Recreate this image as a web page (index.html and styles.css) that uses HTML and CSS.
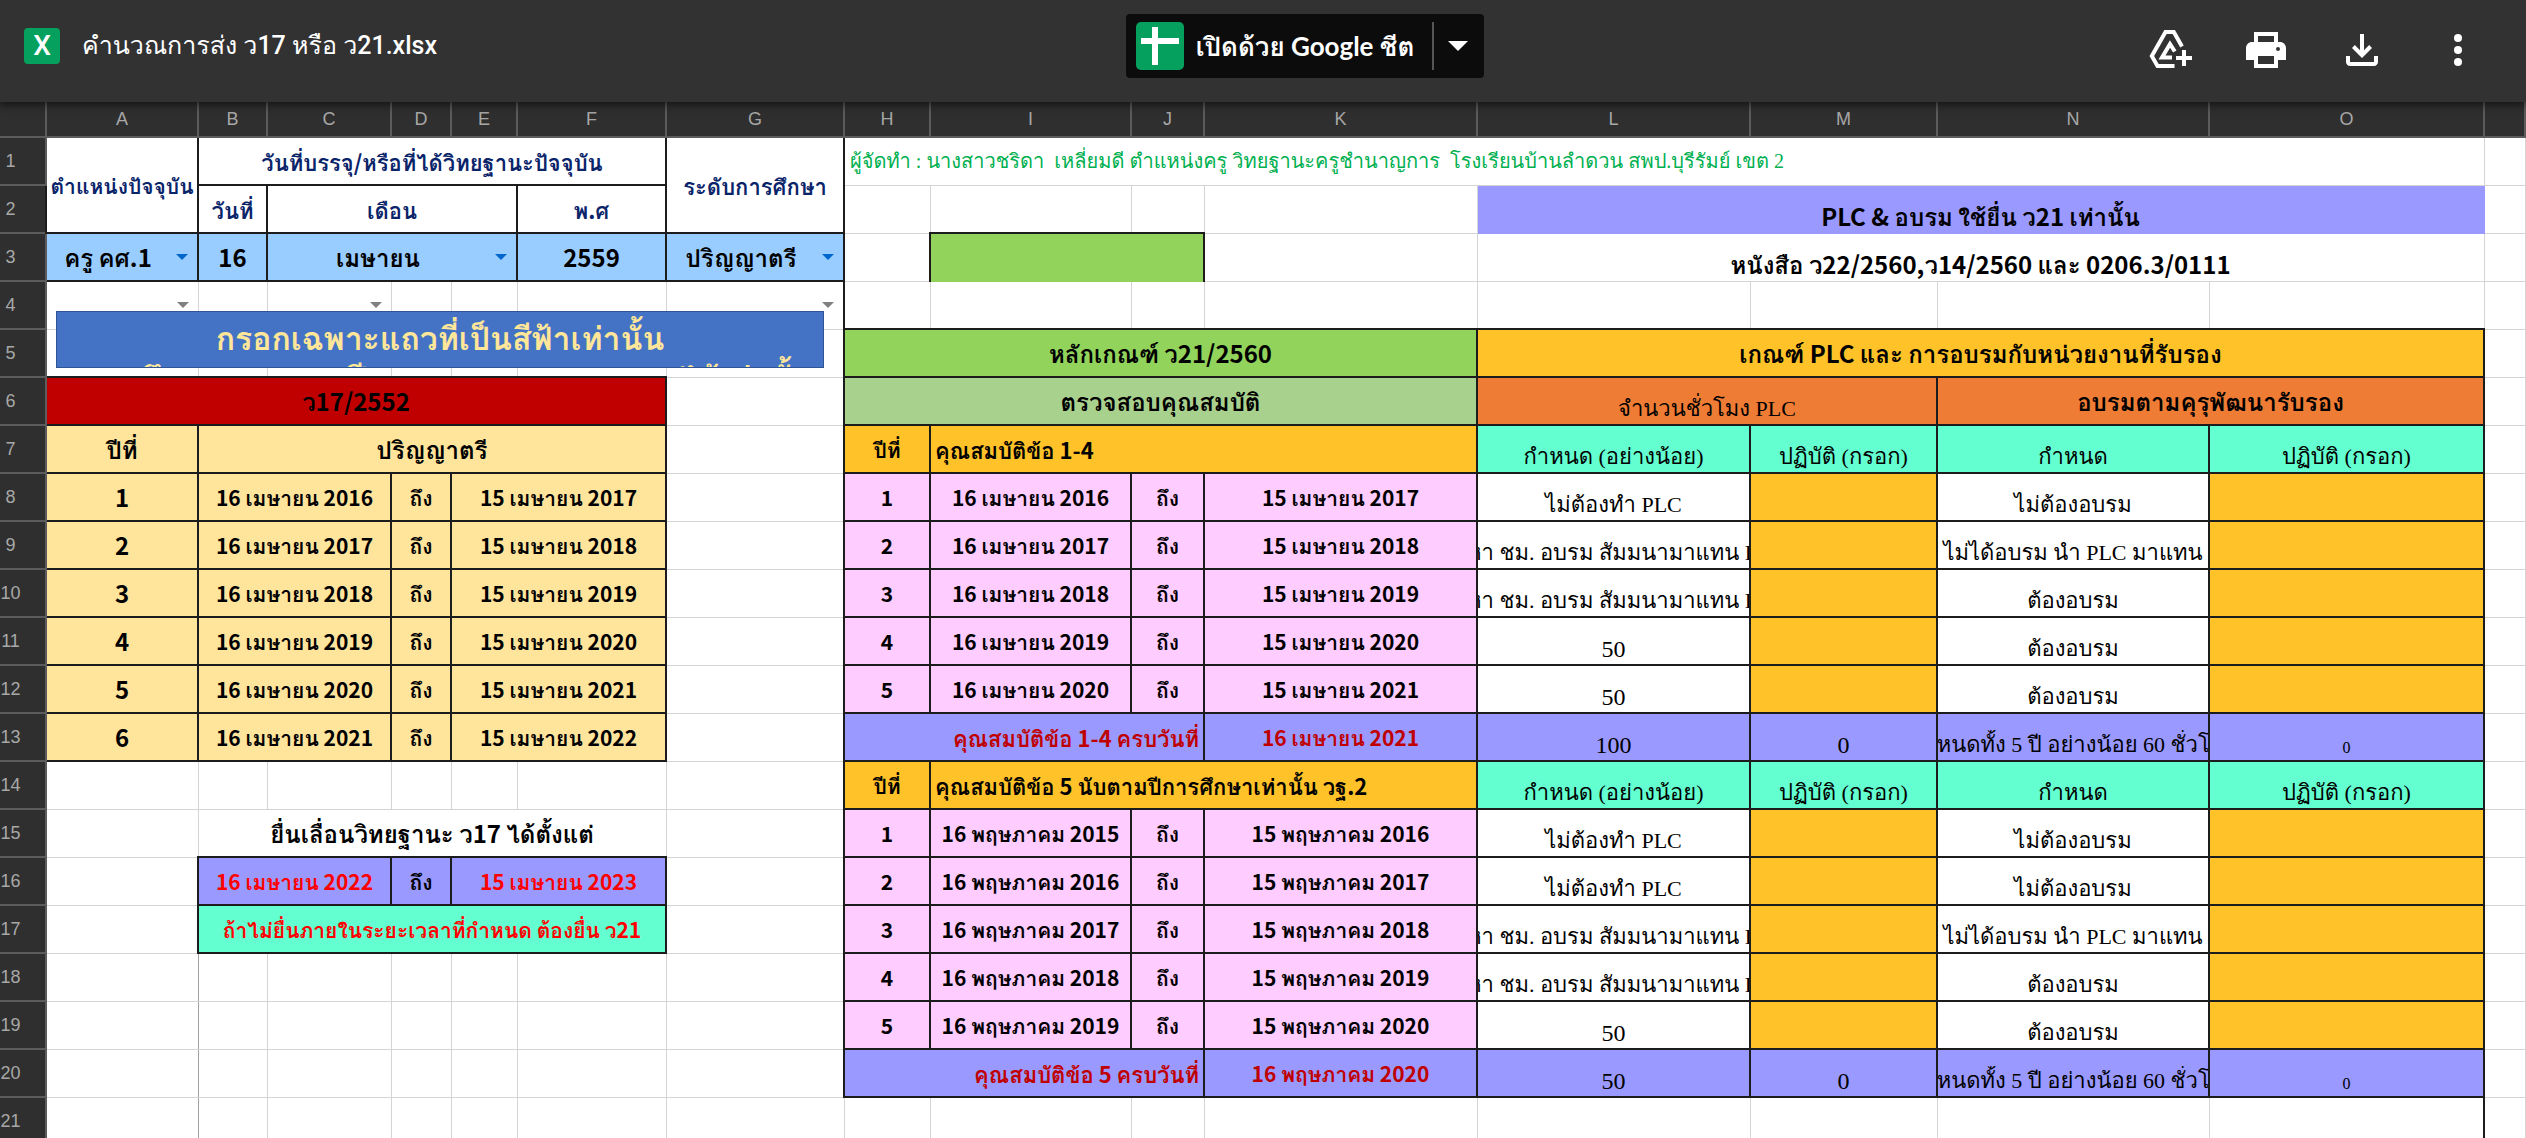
FILE: index.html
```html
<!DOCTYPE html>
<html lang="th">
<head>
<meta charset="utf-8">
<meta name="viewport" content="width=device-width, initial-scale=1">
<title>คำนวณการส่ง ว17 หรือ ว21.xlsx</title>
<link rel="stylesheet" href="styles.css">
</head>
<body>
<header class="toolbar">
  <div class="file">
    <span class="file-icon" aria-hidden="true">X</span>
    <h1 class="file-name">คำนวณการส่ง ว17 หรือ ว21.xlsx</h1>
  </div>
  <div class="open-with">
    <button class="open-main" type="button">
      <svg width="48" height="48" viewBox="0 0 48 48" aria-hidden="true"><rect width="48" height="48" rx="5" fill="#05a05d"/><path d="M16 5h6v11h21v6H22v21h-6V22H5v-6h11z" fill="#fff"/></svg>
      <span>เปิดด้วย Google ชีต</span>
    </button>
    <button class="open-more" type="button" aria-label="ตัวเลือกเพิ่มเติม">
      <svg width="20" height="10" viewBox="0 0 20 10" aria-hidden="true"><path d="M0 0h20L10 10z" fill="#fff"/></svg>
    </button>
  </div>
  <div class="actions">
    <button class="icon-button" type="button" aria-label="เพิ่มลงในไดรฟ์">
      <svg width="48" height="48" viewBox="0 0 48 48" fill="none" stroke="#fff" stroke-width="4" aria-hidden="true"><path d="M36 20.500L27.800 6H19.500L5.800 30l5.700 10H28.500M28.800 25.500L24 18l-8 13.500h10"/><path d="M30 32h16M38 24v16"/></svg>
    </button>
    <button class="icon-button" type="button" aria-label="พิมพ์">
      <svg width="48" height="48" viewBox="0 0 24 24" fill="#fff" aria-hidden="true"><path d="M19 8h-1V3H6v5H5c-1.660 0-3 1.340-3 3v6h4v4h12v-4h4v-6c0-1.660-1.340-3-3-3zM8 5h8v3H8V5zm8 14H8v-4h8v4zm2-6.500a1 1 0 1 1 0-2 1 1 0 0 1 0 2z"/></svg>
    </button>
    <button class="icon-button" type="button" aria-label="ดาวน์โหลด">
      <svg width="48" height="48" viewBox="0 0 24 24" fill="#fff" aria-hidden="true"><path d="M12 16l-5-5 1.400-1.450 2.600 2.600V4h2v8.150l2.600-2.600L17 11l-5 5zm-6 4c-1.100 0-2-.900-2-2v-3h2v3h12v-3h2v3c0 1.100-.900 2-2 2H6z"/></svg>
    </button>
    <button class="icon-button" type="button" aria-label="การทำงานเพิ่มเติม">
      <svg width="48" height="48" viewBox="0 0 24 24" fill="#fff" aria-hidden="true"><circle cx="12" cy="6" r="2"/><circle cx="12" cy="12" r="2"/><circle cx="12" cy="18" r="2"/></svg>
    </button>
  </div>
</header>
<main class="sheet">
<table class="grid">
<colgroup><col class="w-head"><col class="w-a"><col class="w-b"><col class="w-c"><col class="w-d"><col class="w-e"><col class="w-f"><col class="w-g"><col class="w-h"><col class="w-i"><col class="w-j"><col class="w-k"><col class="w-l"><col class="w-m"><col class="w-n"><col class="w-o"><col></colgroup>
<thead>
<tr><th></th><th scope="col">A</th><th scope="col">B</th><th scope="col">C</th><th scope="col">D</th><th scope="col">E</th><th scope="col">F</th><th scope="col">G</th><th scope="col">H</th><th scope="col">I</th><th scope="col">J</th><th scope="col">K</th><th scope="col">L</th><th scope="col">M</th><th scope="col">N</th><th scope="col">O</th><th></th></tr>
</thead>
<tbody>
<tr><th scope="row">1</th><td class="box navy tight" rowspan="2">ตำแหน่งปัจจุบัน</td><td class="box navy" colspan="5">วันที่บรรจุ/หรือที่ได้วิทยฐานะปัจจุบัน</td><td class="box navy" rowspan="2">ระดับการศึกษา</td><td class="credit" colspan="8">ผู้จัดทำ : นางสาวชริดา&nbsp; เหลี่ยมดี ตำแหน่งครู วิทยฐานะครูชำนาญการ&nbsp; โรงเรียนบ้านลำดวน สพป.บุรีรัมย์ เขต 2</td><td></td></tr>
<tr><th scope="row">2</th><td class="box navy">วันที่</td><td class="box navy" colspan="3">เดือน</td><td class="box navy">พ.ศ</td><td></td><td></td><td></td><td></td><td class="violet violet-edge big low" colspan="4">PLC &amp; อบรม ใช้ยื่น ว21 เท่านั้น</td><td></td></tr>
<tr><th scope="row">3</th><td class="box sky"><select class="pick" aria-label="ตำแหน่งปัจจุบัน"><option>ครู คศ.1</option></select></td><td class="box sky big">16</td><td class="box sky" colspan="3"><select class="pick" aria-label="เดือน"><option>เมษายน</option></select></td><td class="box sky big">2559</td><td class="box sky"><select class="pick" aria-label="ระดับการศึกษา"><option>ปริญญาตรี</option></select></td><td></td><td class="lime lime-box" colspan="2"></td><td></td><td class="big low" colspan="4">หนังสือ ว22/2560,ว14/2560 และ 0206.3/0111</td><td></td></tr>
<tr><th scope="row">4</th><td><select class="pick pick-empty" aria-label="A4"><option></option></select></td><td></td><td><select class="pick pick-empty" aria-label="C4"><option></option></select></td><td></td><td></td><td></td><td class="edge-right"><select class="pick pick-empty" aria-label="G4"><option></option></select></td><td></td><td></td><td></td><td></td><td></td><td></td><td></td><td></td><td></td></tr>
<tr><th scope="row">5</th><td></td><td></td><td></td><td></td><td></td><td></td><td></td><td class="box lime big" colspan="4">หลักเกณฑ์ ว21/2560</td><td class="box amber big" colspan="4">เกณฑ์ PLC และ การอบรมกับหน่วยงานที่รับรอง</td><td></td></tr>
<tr><th scope="row">6</th><td class="box red big" colspan="6">ว17/2552</td><td></td><td class="box sage big" colspan="4">ตรวจสอบคุณสมบัติ</td><td class="box orange serif" colspan="2">จำนวนชั่วโมง PLC</td><td class="box orange big" colspan="2">อบรมตามคุรุพัฒนารับรอง</td><td></td></tr>
<tr><th scope="row">7</th><td class="box sand big">ปีที่</td><td class="box sand big" colspan="5">ปริญญาตรี</td><td></td><td class="box amber">ปีที่</td><td class="box amber left" colspan="3">คุณสมบัติข้อ 1-4</td><td class="box mint serif">กำหนด (อย่างน้อย)</td><td class="box mint serif">ปฏิบัติ (กรอก)</td><td class="box mint serif">กำหนด</td><td class="box mint serif">ปฏิบัติ (กรอก)</td><td></td></tr>
<tr><th scope="row">8</th><td class="box sand big">1</td><td class="box sand" colspan="2">16 เมษายน 2016</td><td class="box sand">ถึง</td><td class="box sand" colspan="2">15 เมษายน 2017</td><td></td><td class="box pink">1</td><td class="box pink">16 เมษายน 2016</td><td class="box pink">ถึง</td><td class="box pink">15 เมษายน 2017</td><td class="box serif">ไม่ต้องทำ PLC</td><td class="box amber"></td><td class="box serif">ไม่ต้องอบรม</td><td class="box amber"></td><td></td></tr>
<tr><th scope="row">9</th><td class="box sand big">2</td><td class="box sand" colspan="2">16 เมษายน 2017</td><td class="box sand">ถึง</td><td class="box sand" colspan="2">15 เมษายน 2018</td><td></td><td class="box pink">2</td><td class="box pink">16 เมษายน 2017</td><td class="box pink">ถึง</td><td class="box pink">15 เมษายน 2018</td><td class="box serif"><div class="clip">ให้หา ชม. อบรม สัมมนามาแทน PLC</div></td><td class="box amber"></td><td class="box serif"><div class="clip">ไม่ได้อบรม นำ PLC มาแทน</div></td><td class="box amber"></td><td></td></tr>
<tr><th scope="row">10</th><td class="box sand big">3</td><td class="box sand" colspan="2">16 เมษายน 2018</td><td class="box sand">ถึง</td><td class="box sand" colspan="2">15 เมษายน 2019</td><td></td><td class="box pink">3</td><td class="box pink">16 เมษายน 2018</td><td class="box pink">ถึง</td><td class="box pink">15 เมษายน 2019</td><td class="box serif"><div class="clip">ให้หา ชม. อบรม สัมมนามาแทน PLC</div></td><td class="box amber"></td><td class="box serif">ต้องอบรม</td><td class="box amber"></td><td></td></tr>
<tr><th scope="row">11</th><td class="box sand big">4</td><td class="box sand" colspan="2">16 เมษายน 2019</td><td class="box sand">ถึง</td><td class="box sand" colspan="2">15 เมษายน 2020</td><td></td><td class="box pink">4</td><td class="box pink">16 เมษายน 2019</td><td class="box pink">ถึง</td><td class="box pink">15 เมษายน 2020</td><td class="box serif number">50</td><td class="box amber"></td><td class="box serif">ต้องอบรม</td><td class="box amber"></td><td></td></tr>
<tr><th scope="row">12</th><td class="box sand big">5</td><td class="box sand" colspan="2">16 เมษายน 2020</td><td class="box sand">ถึง</td><td class="box sand" colspan="2">15 เมษายน 2021</td><td></td><td class="box pink">5</td><td class="box pink">16 เมษายน 2020</td><td class="box pink">ถึง</td><td class="box pink">15 เมษายน 2021</td><td class="box serif number">50</td><td class="box amber"></td><td class="box serif">ต้องอบรม</td><td class="box amber"></td><td></td></tr>
<tr><th scope="row">13</th><td class="box sand big">6</td><td class="box sand" colspan="2">16 เมษายน 2021</td><td class="box sand">ถึง</td><td class="box sand" colspan="2">15 เมษายน 2022</td><td></td><td class="box violet crimson right" colspan="3">คุณสมบัติข้อ 1-4 ครบวันที่</td><td class="box violet crimson">16 เมษายน 2021</td><td class="box violet serif number">100</td><td class="box violet serif number">0</td><td class="box violet serif"><div class="clip">กำหนดทั้ง 5 ปี อย่างน้อย 60 ชั่วโมง</div></td><td class="box violet serif small">0</td><td></td></tr>
<tr><th scope="row">14</th><td></td><td></td><td></td><td></td><td></td><td></td><td></td><td class="box amber">ปีที่</td><td class="box amber left" colspan="3">คุณสมบัติข้อ 5 นับตามปีการศึกษาเท่านั้น วฐ.2</td><td class="box mint serif">กำหนด (อย่างน้อย)</td><td class="box mint serif">ปฏิบัติ (กรอก)</td><td class="box mint serif">กำหนด</td><td class="box mint serif">ปฏิบัติ (กรอก)</td><td></td></tr>
<tr><th scope="row">15</th><td></td><td class="big" colspan="5">ยื่นเลื่อนวิทยฐานะ ว17 ได้ตั้งแต่</td><td></td><td class="box pink">1</td><td class="box pink">16 พฤษภาคม 2015</td><td class="box pink">ถึง</td><td class="box pink">15 พฤษภาคม 2016</td><td class="box serif">ไม่ต้องทำ PLC</td><td class="box amber"></td><td class="box serif">ไม่ต้องอบรม</td><td class="box amber"></td><td></td></tr>
<tr><th scope="row">16</th><td></td><td class="box violet scarlet" colspan="2">16 เมษายน 2022</td><td class="box violet">ถึง</td><td class="box violet scarlet" colspan="2">15 เมษายน 2023</td><td></td><td class="box pink">2</td><td class="box pink">16 พฤษภาคม 2016</td><td class="box pink">ถึง</td><td class="box pink">15 พฤษภาคม 2017</td><td class="box serif">ไม่ต้องทำ PLC</td><td class="box amber"></td><td class="box serif">ไม่ต้องอบรม</td><td class="box amber"></td><td></td></tr>
<tr><th scope="row">17</th><td></td><td class="box mint scarlet" colspan="5">ถ้าไม่ยื่นภายในระยะเวลาที่กำหนด ต้องยื่น ว21</td><td></td><td class="box pink">3</td><td class="box pink">16 พฤษภาคม 2017</td><td class="box pink">ถึง</td><td class="box pink">15 พฤษภาคม 2018</td><td class="box serif"><div class="clip">ให้หา ชม. อบรม สัมมนามาแทน PLC</div></td><td class="box amber"></td><td class="box serif"><div class="clip">ไม่ได้อบรม นำ PLC มาแทน</div></td><td class="box amber"></td><td></td></tr>
<tr><th scope="row">18</th><td class="dim-right"></td><td></td><td></td><td></td><td></td><td></td><td></td><td class="box pink">4</td><td class="box pink">16 พฤษภาคม 2018</td><td class="box pink">ถึง</td><td class="box pink">15 พฤษภาคม 2019</td><td class="box serif"><div class="clip">ให้หา ชม. อบรม สัมมนามาแทน PLC</div></td><td class="box amber"></td><td class="box serif">ต้องอบรม</td><td class="box amber"></td><td></td></tr>
<tr><th scope="row">19</th><td class="dim-right"></td><td></td><td></td><td></td><td></td><td></td><td></td><td class="box pink">5</td><td class="box pink">16 พฤษภาคม 2019</td><td class="box pink">ถึง</td><td class="box pink">15 พฤษภาคม 2020</td><td class="box serif number">50</td><td class="box amber"></td><td class="box serif">ต้องอบรม</td><td class="box amber"></td><td></td></tr>
<tr><th scope="row">20</th><td class="dim-right"></td><td></td><td></td><td></td><td></td><td></td><td></td><td class="box violet crimson right" colspan="3">คุณสมบัติข้อ 5 ครบวันที่</td><td class="box violet crimson">16 พฤษภาคม 2020</td><td class="box violet serif number">50</td><td class="box violet serif number">0</td><td class="box violet serif"><div class="clip">กำหนดทั้ง 5 ปี อย่างน้อย 60 ชั่วโมง</div></td><td class="box violet serif small">0</td><td></td></tr>
<tr><th scope="row">21</th><td class="dim-right"></td><td></td><td></td><td></td><td></td><td></td><td></td><td></td><td></td><td></td><td></td><td></td><td></td><td></td><td class="edge-right"></td><td></td></tr>
</tbody>
</table>
<div class="note">กรอกเฉพาะแถวที่เป็นสีฟ้าเท่านั้น<br>ระบบจึงแสดงผลของปีตามระยะเวลาครบรอบได้เท่านั้น</div>
</main>
</body>
</html>
```
FILE: styles.css
```css
* {
  box-sizing: border-box;
}

body {
  margin: 0;
  height: 100vh;
  display: flex;
  flex-direction: column;
  overflow: hidden;
  background: #fff;
  font-family: "Noto Sans CJK SC", Loma, sans-serif;
}

button {
  margin: 0;
  padding: 0;
  border: 0;
  background: none;
  color: inherit;
  font: inherit;
  cursor: pointer;
}

svg {
  display: block;
}

/* Toolbar */
.toolbar {
  position: relative;
  z-index: 1;
  flex: none;
  height: 102px;
  padding: 0 44px 0 24px;
  display: grid;
  grid-template-columns: 1fr auto 1fr;
  background: #323232;
  color: #fff;
  font-family: Roboto, Loma, sans-serif;
  box-shadow: 0 0 10px 2px rgba(0, 0, 0, 0.7);
}

.file {
  display: flex;
  align-items: center;
  gap: 22px;
  height: 92px;
}

.file-icon {
  width: 36px;
  height: 36px;
  border-radius: 4px;
  background: #05a05d;
  font-size: 28px;
  font-weight: 500;
  line-height: 36px;
  text-align: center;
}

.file-name {
  margin: 0;
  font-size: 25px;
  font-weight: 500;
  line-height: 40px;
  white-space: nowrap;
}

.open-with {
  display: flex;
  align-items: center;
  height: 64px;
  margin-top: 14px;
  margin-left: 104px;
  padding: 8px 16px 8px 10px;
  border-radius: 4px;
  background: #0c0c0c;
}

.open-main {
  display: flex;
  align-items: center;
  gap: 12px;
  padding-right: 18px;
  font-family: Lato, Loma, sans-serif;
  font-size: 26px;
  font-weight: 700;
  line-height: 48px;
  white-space: nowrap;
}

.open-more {
  height: 48px;
  padding-left: 14px;
  border-left: 2px solid #555;
}

.actions {
  display: flex;
  justify-content: flex-end;
  gap: 48px;
  height: 48px;
  margin-top: 26px;
}

.icon-button {
  width: 48px;
  height: 48px;
}

/* Spreadsheet */
.sheet {
  position: relative;
  flex: 1;
  min-height: 0;
  overflow: hidden;
}

.grid {
  width: 100%;
  table-layout: fixed;
  border-collapse: collapse;
}

.w-head { width: 46px; }
.w-a { width: 152px; }
.w-b { width: 69px; }
.w-c { width: 124px; }
.w-d { width: 60px; }
.w-e { width: 66px; }
.w-f { width: 149px; }
.w-g { width: 178px; }
.w-h { width: 86px; }
.w-i { width: 201px; }
.w-j { width: 73px; }
.w-k { width: 273px; }
.w-l { width: 273px; }
.w-m { width: 187px; }
.w-n { width: 272px; }
.w-o { width: 275px; }

th {
  height: 48px;
  padding: 0;
  border: 2px solid #5c5c5c;
  border-left: 0;
  background: #2f2f2f;
  color: #a8a8a8;
  font-family: "Liberation Sans", sans-serif;
  font-size: 18px;
  font-weight: 400;
}

thead th {
  height: 35px;
  border-top: 0;
}

tbody th {
  padding-right: 24px;
}

td {
  height: 48px;
  padding: 0 2px;
  border: 1px solid #d4d4d4;
  color: #000;
  font-size: 21px;
  font-weight: 700;
  line-height: 34px;
  text-align: center;
  white-space: nowrap;
  overflow: hidden;
}

.big { font-size: 24px; }
.left { font-size: 22px; text-align: left; padding-left: 4px; }
.right { font-size: 22px; text-align: right; padding-right: 4px; }
.low { vertical-align: bottom; }

.serif {
  font-family: "Liberation Serif", Loma, serif;
  font-size: 22px;
  font-weight: 400;
  line-height: 30px;
  vertical-align: bottom;
}

.number { font-size: 24px; }

.small {
  font-size: 16px;
  line-height: 24px;
}

.clip {
  display: flex;
  justify-content: center;
  margin: 0 -2px;
  overflow: hidden;
}

.credit {
  padding-left: 5px;
  color: #00b050;
  font-family: "Liberation Serif", Loma, serif;
  font-size: 20px;
  font-weight: 400;
  text-align: left;
}

.box { border: 2px solid #1c1c1c; }
.edge-right { border-right: 2px solid #1c1c1c; }
.dim-right { border-right-color: #a0a0a0; }
.lime-box { border: 2px solid #1c1c1c; border-bottom: 1px solid #92d05c; }
.violet-edge { border-color: #9999ff; }

.navy { color: #0a246a; font-size: 22px; }
.tight { padding: 0; font-size: 21px; }
.crimson { color: #c00000; }
.scarlet { color: #ff0000; }

.sky { background: #99ccff; }
.lime { background: #92d35c; }
.sage { background: #a9d18e; }
.amber { background: #ffc229; }
.orange { background: #ee7c35; }
.mint { background: #63ffd0; }
.red { background: #c00000; }
.sand { background: #ffe49c; }
.pink { background: #ffccff; }
.violet { background: #9999ff; }

.pick {
  display: block;
  width: 100%;
  height: 44px;
  padding: 0 28px 0 0;
  border: 0;
  appearance: none;
  background: url("data:image/svg+xml,%3Csvg xmlns='http://www.w3.org/2000/svg' width='12' height='6'%3E%3Cpath d='M0 0h12L6 6z' fill='%230066cc'/%3E%3C/svg%3E") right 7px center no-repeat;
  color: #000;
  font: inherit;
  font-size: 24px;
  text-align-last: center;
}

.pick-empty {
  background-image: url("data:image/svg+xml,%3Csvg xmlns='http://www.w3.org/2000/svg' width='12' height='6'%3E%3Cpath d='M0 0h12L6 6z' fill='%23808080'/%3E%3C/svg%3E");
}

/* Drawing that floats over rows 4 and 5 */
.note {
  position: absolute;
  top: 209px;
  left: 56px;
  width: 768px;
  height: 57px;
  padding-top: 4px;
  border: 1px solid #2f5597;
  background: #4472c4;
  color: #ffe699;
  font-size: 32px;
  font-weight: 700;
  line-height: 40px;
  text-align: center;
  white-space: nowrap;
  overflow: hidden;
}
```
